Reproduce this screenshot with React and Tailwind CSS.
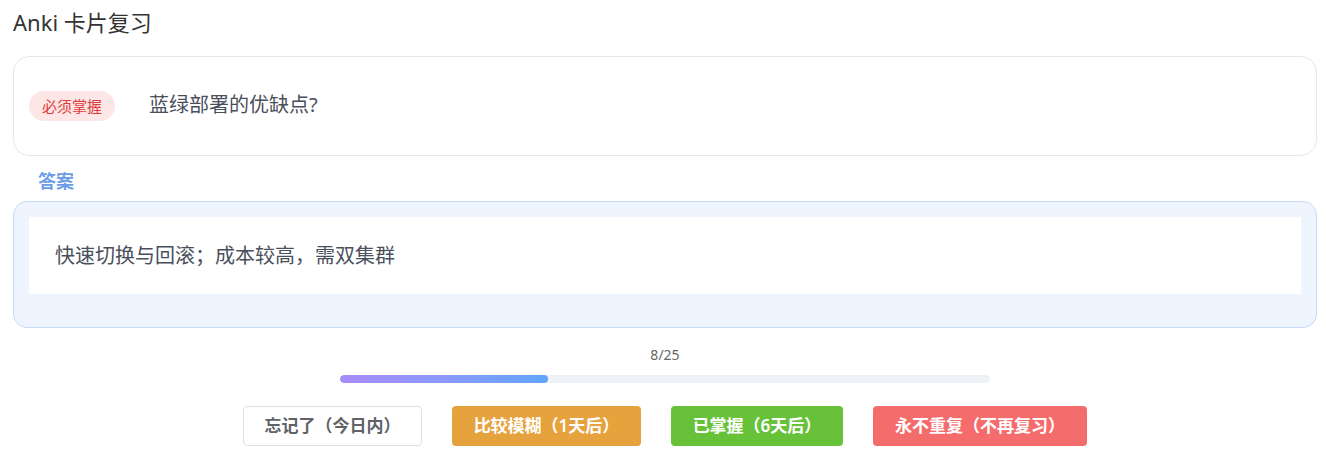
export default function App() {
  const current = 8;
  const total = 25;
  const pct = (current / total) * 100;

  return (
    <div
      className="bg-white pl-[13px] pr-[9px] pt-[7px] pb-4 text-[#333]"
      style={{ fontFamily: '"Noto Sans", "Noto Sans CJK SC", sans-serif' }}
    >
      <h1 className="text-[22px] leading-[30px] font-normal text-[#333]">Anki 卡片复习</h1>

      {/* 问题卡片 */}
      <div className="mt-[19px] h-[100px] flex items-center px-[15px] border border-[#e4e7ed] rounded-[16px] bg-white">
        <span className="h-[30px] px-[13px] flex items-center rounded-full bg-[#fde6e6] text-[#e03b3b] text-[15px]">
          必须掌握
        </span>
        <span className="ml-[34px] text-[20px] leading-[28px] -mt-[3px] text-[#4a4f5c]">蓝绿部署的优缺点?</span>
      </div>

      {/* 答案 */}
      <div className="mt-[13px] ml-[25px] text-[18px] leading-[24px] font-bold text-[#6b9ce8]">答案</div>
      <div className="mt-[8px] border border-[#c8dbf6] bg-[#eef5fe] rounded-[14px] p-[15px] pb-[33px]">
        <div className="h-[77px] bg-white flex items-center pl-[26px] text-[20px] text-[#4a4f5c]">
          快速切换与回滚；成本较高，需双集群
        </div>
      </div>

      {/* 进度 */}
      <div className="mt-[17px] text-center text-[14px] leading-[20px] text-[#666]">
        {current}/{total}
      </div>
      <div className="mt-[10px] mx-auto w-[650px] h-[8px] rounded-full bg-[#eef2f7] overflow-hidden">
        <div
          className="h-full rounded-full bg-gradient-to-r from-[#a78bfa] to-[#60a5fa]"
          style={{ width: `${pct}%` }}
        />
      </div>

      {/* 操作按钮 */}
      <div className="mt-[23px] flex justify-center gap-[30px]">
        <button className="h-[40px] w-[179px] rounded-[4px] border border-[#dcdfe6] bg-white text-[#606266] text-[17px] font-semibold">
          忘记了（今日内）
        </button>
        <button className="h-[40px] w-[189px] rounded-[4px] bg-[#e6a23c] text-white text-[17px] font-semibold">
          比较模糊（1天后）
        </button>
        <button className="h-[40px] w-[172px] rounded-[4px] bg-[#67c23a] text-white text-[17px] font-semibold">
          已掌握（6天后）
        </button>
        <button className="h-[40px] w-[214px] rounded-[4px] bg-[#f56c6c] text-white text-[17px] font-semibold">
          永不重复（不再复习）
        </button>
      </div>
    </div>
  );
}
